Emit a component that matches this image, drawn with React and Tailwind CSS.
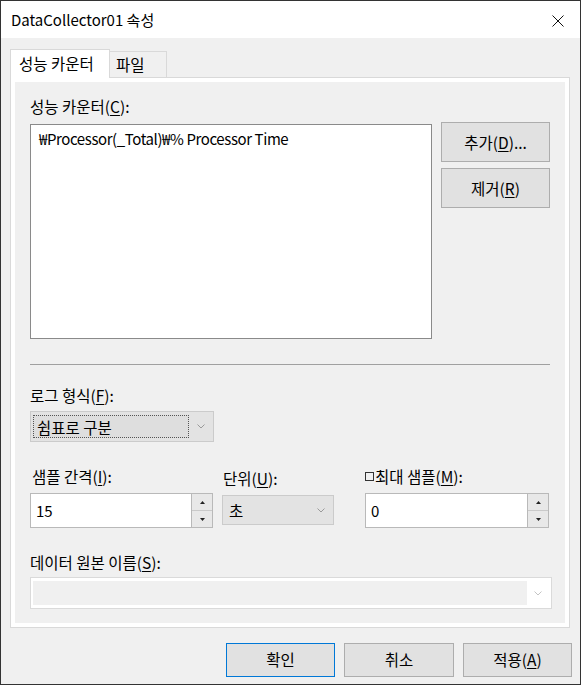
import React from 'react';

const font = "font-['Noto_Sans_CJK_KR','Noto_Sans',sans-serif]";

function Acc({ text, k, tail = ':' }) {
  return (
    <>
      {text}(<span className="underline underline-offset-2 decoration-1">{k}</span>){tail}
    </>
  );
}

function Chevron({ color = '#9a9a9a' }) {
  return (
    <svg width="8" height="5" viewBox="0 0 8 5">
      <path d="M0.5 0.5 L4 4 L7.5 0.5" fill="none" stroke={color} strokeWidth="1" />
    </svg>
  );
}

function Arrow({ down }) {
  return (
    <svg width="5" height="3" viewBox="0 0 5 3">
      <polygon points={down ? '0,0 5,0 2.5,3' : '0,3 5,3 2.5,0'} fill="#222" />
    </svg>
  );
}

function Spin({ value }) {
  return (
    <div className="flex h-[35px]">
      <div className="flex-1 border border-[#b9b9b9] bg-white pl-[5px] flex items-center text-[15px]">
        {value}
      </div>
      <div className="w-[21px] flex flex-col border border-l-0 border-[#b9b9b9] bg-[#e8e8e8]">
        <div className="flex-1 flex items-center justify-center border-b border-[#c9c9c9]">
          <Arrow />
        </div>
        <div className="flex-1 flex items-center justify-center">
          <Arrow down />
        </div>
      </div>
    </div>
  );
}

function Btn({ children, primary, className = '' }) {
  return (
    <div
      className={`flex items-center justify-center bg-[#e1e1e1] border ${
        primary ? 'border-[#0078d7]' : 'border-[#adadad]'
      } text-[15.5px] ${className}`}
    >
      {children}
    </div>
  );
}

export default function App() {
  return (
    <div className={`w-[581px] h-[685px] border border-[#333] bg-[#f0f0f0] flex flex-col text-black ${font}`}>
      {/* title bar */}
      <div className="h-[37px] bg-white flex items-center justify-between pl-[10px] pr-[16px]">
        <span className="text-[15px] leading-[20px]">DataCollector01 속성</span>
        <svg width="12" height="12" viewBox="0 0 12 12" className="mt-[3px]">
          <path d="M0.5 0.5 L11.5 11.5 M11.5 0.5 L0.5 11.5" stroke="#111" strokeWidth="1" />
        </svg>
      </div>

      <div className="pl-[9px] pt-[11px]">
        {/* tabs */}
        <div className="flex items-end h-[28px] text-[15.5px]">
          <div className="relative z-10 w-[100px] h-[29px] -mb-px bg-white border border-b-0 border-[#d9d9d9] flex items-center pl-[8px]">
            성능 카운터
          </div>
          <div className="-ml-px w-[58px] h-[26px] bg-[#f0f0f0] border border-b-0 border-[#d9d9d9] flex items-center pl-[6px]">
            파일
          </div>
        </div>

        {/* pane */}
        <div className="w-[560px] border border-[#d9d9d9] bg-white p-[4px]">
          <div className="bg-[#f0f0f0] pl-[15px] pr-[15px] pt-[14px] pb-[14px] text-[15.5px] leading-[20px]">
            <div className="h-[20px]">
              <Acc text="성능 카운터" k="C" />
            </div>
            <div className="mt-[6px] flex gap-[9px] h-[216px]">
              <div className="mt-[2px] w-[403px] h-[215px] border border-[#8a8a8a] bg-white pl-[8px] pt-[4px] text-[15px] tracking-[-0.4px]">
                ₩Processor(_Total)₩% Processor Time
              </div>
              <div className="flex flex-col gap-[6px]">
                <Btn className="w-[109px] h-[40px]">
                  <Acc text="추가" k="D" tail="..." />
                </Btn>
                <Btn className="w-[109px] h-[40px]">
                  <Acc text="제거" k="R" tail="" />
                </Btn>
              </div>
            </div>

            <div className="mt-[26px] h-px w-[520px] bg-[#a0a0a0]" />

            <div className="mt-[20px] h-[20px]">
              <Acc text="로그 형식" k="F" />
            </div>
            <div className="mt-[6px] w-[184px] h-[31px] border border-[#cbcbcb] bg-[#e3e3e3] flex items-center pl-[2px] pr-[8px]">
              <div className="w-[156px] h-[23px] border border-dotted border-[#555] bg-[#dedede] flex items-center pl-[3px]">
                쉼표로 구분
              </div>
              <div className="flex-1 flex justify-end">
                <Chevron />
              </div>
            </div>

            <div className="mt-[24px] flex h-[62px]">
              <div className="w-[183px] flex flex-col">
                <div className="h-[20px] pl-[2px]">
                  <Acc text="샘플 간격" k="I" />
                </div>
                <div className="mt-[7px]">
                  <Spin value="15" />
                </div>
              </div>
              <div className="ml-[9px] w-[112px] flex flex-col pt-[2px]">
                <div className="h-[20px] pl-[1px]">
                  <Acc text="단위" k="U" />
                </div>
                <div className="mt-[7px] h-[30px] border border-[#cbcbcb] bg-[#e3e3e3] flex items-center justify-between pl-[6px] pr-[8px]">
                  <span>초</span>
                  <Chevron />
                </div>
              </div>
              <div className="ml-[31px] w-[184px] flex flex-col">
                <div className="h-[20px] flex items-center">
                  <span className="w-[9px] h-[9px] border border-[#333] mr-[1px] mt-[1px]" />
                  <span>
                    <Acc text="최대 샘플" k="M" />
                  </span>
                </div>
                <div className="mt-[7px]">
                  <Spin value="0" />
                </div>
              </div>
            </div>

            <div className="mt-[24px] h-[20px]">
              <Acc text="데이터 원본 이름" k="S" />
            </div>
            <div className="mt-[5px] w-[522px] h-[32px] border border-[#dadada] bg-white flex items-center pl-[2px] pr-[9px]">
              <div className="w-[494px] h-[24px] bg-[#f0f0f0]" />
              <div className="flex-1 flex justify-end">
                <Chevron color="#c4c4c4" />
              </div>
            </div>
          </div>
        </div>
      </div>

      {/* footer buttons */}
      <div className="mt-[15px] flex justify-end gap-[9px] pr-[8px]">
        <Btn primary className="w-[109px] h-[34px]">확인</Btn>
        <Btn className="w-[110px] h-[34px]">취소</Btn>
        <Btn className="w-[109px] h-[34px]">
          <Acc text="적용" k="A" tail="" />
        </Btn>
      </div>
    </div>
  );
}
